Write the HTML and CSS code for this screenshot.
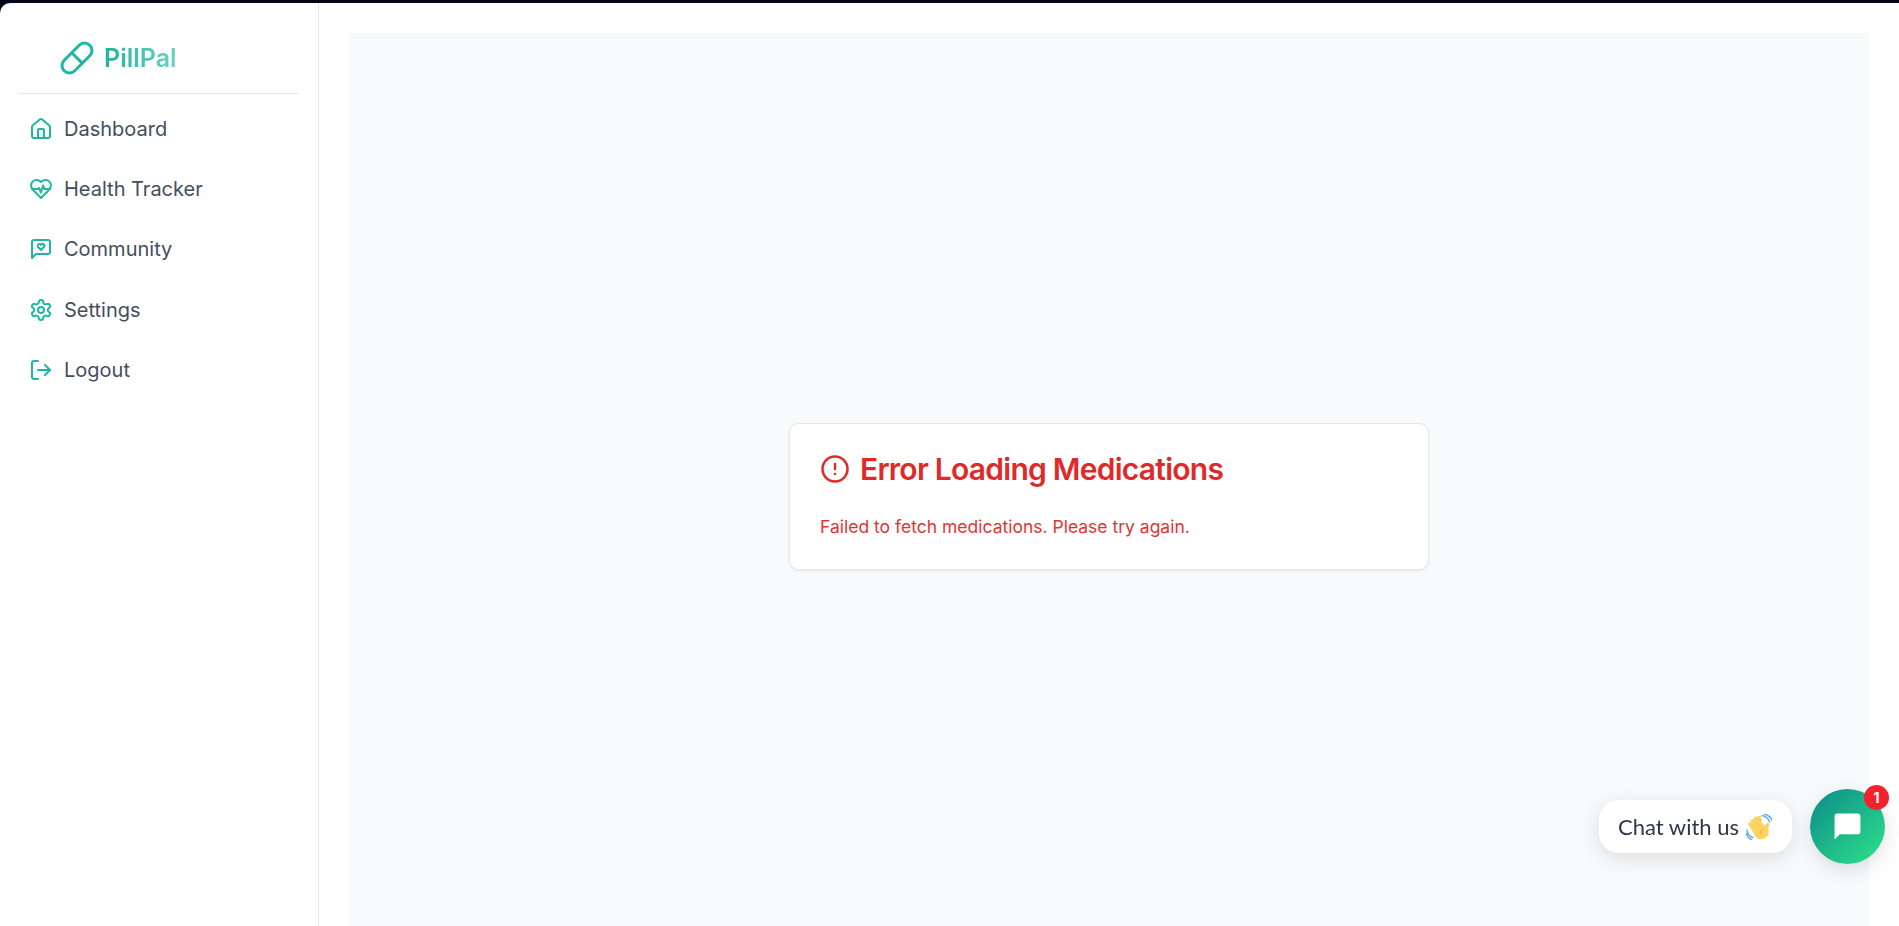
FILE: index.html
```html
<!DOCTYPE html>
<html lang="en">
<head>
  <meta charset="UTF-8">
  <title>PillPal</title>
  <link rel="stylesheet" href="styles.css">
</head>
<body>
  <div class="app">
    <aside class="sidebar">
      <div class="brand">
        <svg class="brand-icon" viewBox="0 0 24 24"><path d="m10.5 20.5 10-10a4.95 4.95 0 1 0-7-7l-10 10a4.95 4.95 0 1 0 7 7Z"/><path d="m8.5 8.5 7 7"/></svg>
        <span class="brand-name">PillPal</span>
      </div>
      <nav class="nav">
        <a class="nav-link" href="#">
          <svg class="nav-icon" viewBox="0 0 24 24"><path d="M15 21v-8a1 1 0 0 0-1-1h-4a1 1 0 0 0-1 1v8"/><path d="M3 10a2 2 0 0 1 .709-1.528l7-5.999a2 2 0 0 1 2.582 0l7 5.999A2 2 0 0 1 21 10v9a2 2 0 0 1-2 2H5a2 2 0 0 1-2-2z"/></svg>
          Dashboard
        </a>
        <a class="nav-link" href="#">
          <svg class="nav-icon" viewBox="0 0 24 24"><path d="M19 14c1.49-1.46 3-3.21 3-5.5A5.5 5.5 0 0 0 16.5 3c-1.76 0-3 .5-4.5 2-1.5-1.5-2.74-2-4.5-2A5.5 5.5 0 0 0 2 8.5c0 2.3 1.5 4.05 3 5.5l7 7Z"/><path d="M3.22 12H9.5l.5-1 2 4.5 2-7 1.5 3.5h5.27"/></svg>
          Health Tracker
        </a>
        <a class="nav-link" href="#">
          <svg class="nav-icon" viewBox="0 0 24 24"><path d="M21 15a2 2 0 0 1-2 2H7l-4 4V5a2 2 0 0 1 2-2h14a2 2 0 0 1 2 2z"/><path d="M14.8 7.5a1.84 1.84 0 0 0-2.6 0l-.2.3-.3-.3a1.84 1.84 0 1 0-2.4 2.8L12 13l2.7-2.7c.9-.9.8-2.1.1-2.8"/></svg>
          Community
        </a>
        <a class="nav-link" href="#">
          <svg class="nav-icon" viewBox="0 0 24 24"><path d="M12.22 2h-.44a2 2 0 0 0-2 2v.18a2 2 0 0 1-1 1.73l-.43.25a2 2 0 0 1-2 0l-.15-.08a2 2 0 0 0-2.73.73l-.22.38a2 2 0 0 0 .73 2.73l.15.1a2 2 0 0 1 1 1.72v.51a2 2 0 0 1-1 1.74l-.15.09a2 2 0 0 0-.73 2.73l.22.38a2 2 0 0 0 2.73.73l.15-.08a2 2 0 0 1 2 0l.43.25a2 2 0 0 1 1 1.73V20a2 2 0 0 0 2 2h.44a2 2 0 0 0 2-2v-.18a2 2 0 0 1 1-1.73l.43-.25a2 2 0 0 1 2 0l.15.08a2 2 0 0 0 2.73-.73l.22-.39a2 2 0 0 0-.73-2.73l-.15-.08a2 2 0 0 1-1-1.74v-.5a2 2 0 0 1 1-1.74l.15-.09a2 2 0 0 0 .73-2.73l-.22-.38a2 2 0 0 0-2.73-.73l-.15.08a2 2 0 0 1-2 0l-.43-.25a2 2 0 0 1-1-1.73V4a2 2 0 0 0-2-2z"/><circle cx="12" cy="12" r="3"/></svg>
          Settings
        </a>
        <a class="nav-link" href="#">
          <svg class="nav-icon" viewBox="0 0 24 24"><path d="M9 21H5a2 2 0 0 1-2-2V5a2 2 0 0 1 2-2h4"/><path d="m16 17 5-5-5-5"/><path d="M21 12H9"/></svg>
          Logout
        </a>
      </nav>
    </aside>

    <main class="main">
      <div class="panel">
        <div class="error-card">
          <h2 class="error-title">
            <svg class="error-icon" viewBox="0 0 24 24"><circle cx="12" cy="12" r="10"/><path d="M12 8v4"/><path d="M12 16h.01"/></svg>
            Error Loading Medications
          </h2>
          <p class="error-text">Failed to fetch medications. Please try again.</p>
        </div>
      </div>
    </main>
  </div>

  <div class="chat-widget">
    <div class="chat-label">
      Chat with us
      <svg class="wave" viewBox="0 0 36 36">
        <path class="wave-line" d="M22 2.500c4 0 9 3 10.500 8.500M25 .5c5 0 9.500 4 10.500 8M1.500 22c0 5 3 9 8 10.500M.5 27c1 4 4 7.500 7.500 8.500"/>
        <path class="wave-finger" d="M12 24 5.500 14M15 21 9 9.500M18 19 13.500 6M21 18 18.500 5M27 22l3-7"/>
        <circle class="wave-hand" cx="21" cy="24.500" r="10.500"/>
        <path class="wave-crease" d="M24 20c-3 2-4.500 5-3 9"/>
      </svg>
    </div>
    <button class="chat-btn" type="button">
      <svg class="chat-icon" viewBox="0 0 24 24"><path d="M20 2H4c-1.100 0-2 .9-2 2v18l4-4h14c1.100 0 2-.9 2-2V4c0-1.100-.9-2-2-2z"/></svg>
      <span class="chat-badge">1</span>
    </button>
  </div>
</body>
</html>
```

FILE: styles.css
```css
html, body {
  height: 100%;
}
body {
  margin: 0;
  background: #020617;
  font-family: Inter, "Liberation Sans", sans-serif;
  overflow: hidden;
}
.app {
  display: flex;
  height: calc(100% - 3px);
  margin-top: 3px;
  background: #fff;
  border-top-left-radius: 10px;
}
.sidebar {
  box-sizing: border-box;
  width: 319px;
  flex-shrink: 0;
  padding: 0 19px;
  border-right: 1px solid #e2e8f0;
}
.brand {
  box-sizing: border-box;
  display: flex;
  align-items: center;
  gap: 9px;
  height: 91px;
  padding: 20px 0 0 40px;
  border-bottom: 1px solid #e5e7eb;
}
.brand-icon {
  width: 36px;
  height: 36px;
  fill: none;
  stroke: #1fb6a3;
  stroke-width: 2;
  stroke-linecap: round;
  stroke-linejoin: round;
}
.brand-name {
  font-size: 25px;
  font-weight: 600;
  background: linear-gradient(90deg, #1fb2a0, #6dd3c4);
  -webkit-background-clip: text;
  background-clip: text;
  color: transparent;
}
.nav {
  display: flex;
  flex-direction: column;
  padding-top: 5px;
}
.nav-link {
  display: flex;
  align-items: center;
  gap: 11px;
  height: 60.2px;
  padding-left: 10px;
  font-size: 20px;
  color: #434e60;
  text-decoration: none;
}
.nav-icon {
  width: 24px;
  height: 24px;
  fill: none;
  stroke: #1fb6a3;
  stroke-width: 2;
  stroke-linecap: round;
  stroke-linejoin: round;
}
.main {
  flex: 1;
  padding: 30px 30px 0;
  min-width: 0;
}
.panel {
  display: flex;
  align-items: center;
  justify-content: center;
  height: calc(100% + 34px);
  background: #f9fafb;
}
.error-card {
  box-sizing: border-box;
  width: 640px;
  height: 147px;
  padding: 27px 30px;
  background: #fff;
  border: 1px solid #e2e8f0;
  border-radius: 10px;
  box-shadow: 0 1px 3px rgba(0, 0, 0, 0.08);
}
.error-title {
  display: flex;
  align-items: center;
  gap: 10px;
  margin: 0;
  font-size: 30px;
  font-weight: 600;
  letter-spacing: -0.75px;
  color: #df2a2a;
}
.error-icon {
  width: 30px;
  height: 30px;
  fill: none;
  stroke: #df2a2a;
  stroke-width: 2;
  stroke-linecap: round;
  stroke-linejoin: round;
}
.error-text {
  margin: 29px 0 0;
  font-size: 17.5px;
  color: #e03535;
}
.chat-widget {
  position: fixed;
  right: 14px;
  bottom: 62px;
  display: flex;
  align-items: center;
  gap: 18px;
}
.chat-label {
  display: flex;
  align-items: center;
  gap: 7px;
  height: 53px;
  padding: 0 20px 0 19px;
  background: #fff;
  border-radius: 20px;
  box-shadow: 0 5px 20px rgba(0, 0, 0, 0.12);
  font-family: Lato, sans-serif;
  font-size: 22px;
  color: #2d3748;
}
.wave {
  width: 26px;
  height: 26px;
}
.wave-line {
  fill: none;
  stroke: #5dadec;
  stroke-width: 2;
  stroke-linecap: round;
}
.wave-finger {
  fill: none;
  stroke: #fdd25f;
  stroke-width: 5;
  stroke-linecap: round;
}
.wave-hand {
  fill: #fdd25f;
}
.wave-crease {
  fill: none;
  stroke: #e8a33d;
  stroke-width: 1;
}
.chat-btn {
  position: relative;
  display: flex;
  align-items: center;
  justify-content: center;
  width: 75px;
  height: 75px;
  padding: 0;
  border: none;
  border-radius: 50%;
  background: linear-gradient(135deg, #0d8a8a, #2de38a);
  box-shadow: 0 6px 20px rgba(0, 0, 0, 0.12);
}
.chat-icon {
  width: 31px;
  height: 31px;
  fill: #fff;
}
.chat-badge {
  position: absolute;
  top: -4px;
  right: -4px;
  width: 25px;
  height: 25px;
  border-radius: 50%;
  background: #f5222d;
  color: #fff;
  font-family: Inter, sans-serif;
  font-size: 14px;
  font-weight: 700;
  line-height: 25px;
  text-align: center;
}
```
